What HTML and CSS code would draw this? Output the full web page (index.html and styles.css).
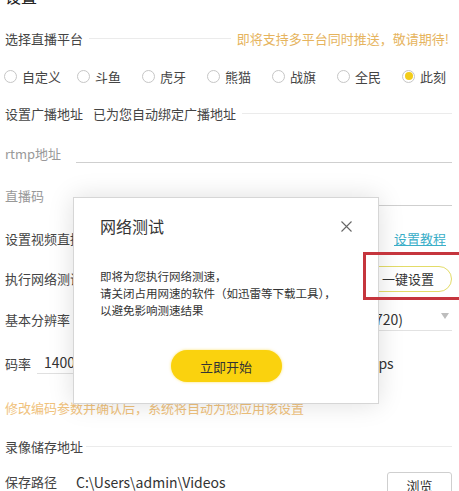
FILE: index.html
```html
<!DOCTYPE html>
<html lang="zh-CN">
<head>
<meta charset="utf-8">
<title>设置</title>
<link rel="stylesheet" href="styles.css">
</head>
<body>
<div class="page">
  <div class="row title">设置</div>
  <div class="row">
    <span class="label">选择直播平台</span>
    <span class="rule short"></span>
    <span class="gold">即将支持多平台同时推送，敬请期待!</span>
  </div>
  <div class="row radios">
    <label class="radio wide"><span class="dot"></span>自定义</label>
    <label class="radio"><span class="dot"></span>斗鱼</label>
    <label class="radio"><span class="dot"></span>虎牙</label>
    <label class="radio"><span class="dot"></span>熊猫</label>
    <label class="radio"><span class="dot"></span>战旗</label>
    <label class="radio"><span class="dot"></span>全民</label>
    <label class="radio last"><span class="dot on"></span>此刻</label>
  </div>
  <div class="row">
    <span class="label">设置广播地址</span>
    <span class="hint">已为您自动绑定广播地址</span>
    <span class="rule"></span>
  </div>
  <div class="row">
    <span class="label field-label muted">rtmp地址</span>
    <span class="field"></span>
  </div>
  <div class="row">
    <span class="label field-label muted">直播码</span>
    <span class="field"></span>
  </div>
  <div class="row">
    <span class="label">设置视频直播参数</span>
    <a class="link">设置教程</a>
  </div>
  <div class="row">
    <span class="label">执行网络测试</span>
    <button class="outline-btn">一键设置</button>
  </div>
  <div class="row">
    <span class="label field-label">基本分辨率</span>
    <span class="select"><span class="select-text">超清(1280*720)</span><span class="caret"></span></span>
  </div>
  <div class="row">
    <span class="label rate-label">码率</span>
    <span class="field rate">1400</span>
    <span class="unit">kbps</span>
  </div>
  <div class="row">
    <span class="notice">修改编码参数并确认后，系统将自动为您应用该设置</span>
  </div>
  <div class="row">
    <span class="label">录像储存地址</span>
    <span class="rule tight"></span>
  </div>
  <div class="row path-row">
    <span class="label field-label">保存路径</span>
    <span class="path">C:\Users\admin\Videos</span>
    <button class="browse">浏览</button>
  </div>
</div>

<div class="modal">
  <div class="modal-head">
    <span class="modal-title">网络测试</span>
    <svg class="close" width="11" height="11" viewBox="0 0 11 11"><path d="M0.5 0.5 L10.5 10.5 M10.5 0.5 L0.5 10.5" stroke="#666" stroke-width="1.1" fill="none"/></svg>
  </div>
  <div class="modal-body">
    <p>即将为您执行网络测速，</p>
    <p>请关闭占用网速的软件（如迅雷等下载工具），</p>
    <p>以避免影响测速结果</p>
  </div>
  <button class="start-btn">立即开始</button>
</div>

<div class="annot"></div>
</body>
</html>
```
FILE: styles.css
```css
* { box-sizing: border-box; }
html, body { margin: 0; padding: 0; }
body {
  width: 459px;
  height: 491px;
  overflow: hidden;
  position: relative;
  background: #fff;
  font-family: "Noto Sans CJK SC", "Noto Sans", sans-serif;
  font-size: 13px;
  color: #333;
}
.page {
  display: grid;
  grid-template-columns: minmax(0, 1fr);
  grid-template-rows: 45px 40px 36px 38px 42px 43px 42px 39px 42px 46px 42px 37px 34px;
  margin-top: -27px;
  padding: 0 7px 0 5px;
}
.row { display: flex; align-items: center; white-space: nowrap; min-width: 0; }
.title { font-size: 16px; color: #222; }
.label { color: #444; }
.muted { color: #999; }
.field-label { width: 71px; flex: 0 0 71px; }
.rule { flex: 1; height: 1px; background: #ebebeb; margin-left: 6px; }
.rule.short { flex: 0 0 142px; }
.rule.tight { margin-left: 3px; }
.gold { margin-left: auto; margin-right: 3px; color: #e6b45e; }
.hint { margin-left: 10px; color: #444; }

.radio { display: flex; align-items: center; width: 65px; flex: 0 0 65px; color: #444; }
.radio.wide { width: 73px; flex: 0 0 73px; margin-left: -1px; }
.radio.last { width: auto; flex: 0 0 auto; }
.dot {
  width: 13px; height: 13px; border: 1px solid #c6c6c6; border-radius: 50%;
  margin-right: 5px; display: flex; align-items: center; justify-content: center;
  background: #fff;
}
.dot.on::after {
  content: ""; width: 8px; height: 8px; border-radius: 50%; background: #f2cc1a;
}

.field { flex: 1; height: 20px; border-bottom: 1px solid #cfcfcf; }
.link { margin-left: auto; margin-right: 6px; color: #3aaec8; text-decoration: underline; }
.outline-btn {
  margin-left: auto; width: 88px; height: 26px; border: 1.5px solid #e3dc68; border-radius: 13px;
  background: #fff; font-family: inherit; font-size: 13px; color: #333; padding: 0;
}
.select {
  flex: 1; height: 24px; border-bottom: 1px solid #e2e2e2; display: flex; align-items: center;
  justify-content: flex-end; padding-right: 3px; font-size: 14px; color: #333;
}
.caret {
  width: 0; height: 0; border-left: 4px solid transparent; border-right: 4px solid transparent;
  border-top: 6px solid #bdbdbd; margin-left: 38px; margin-bottom: 5px;
}
.rate-label { width: 32px; flex: 0 0 32px; }
.rate { flex: 0 0 318px; height: 22px; padding-left: 7px; font-size: 14px; line-height: 20px; color: #333; border-bottom-color: #e0e0e0; }
.unit { margin-left: 7px; font-size: 14px; color: #333; }
.notice { color: #f0c27c; }
.path-row { align-items: flex-start; padding-top: 7px; line-height: 20px; }
.path { font-size: 14px; line-height: 20px; color: #333; }
.browse {
  margin-left: auto; margin-top: 0; width: 65px; height: 26px; border: 1px solid #cfcfcf; border-radius: 3px;
  background: #fff; font-family: inherit; font-size: 13px; color: #333; padding: 0;
}

.modal {
  position: absolute; left: 73px; top: 197px; width: 306px; height: 207px;
  background: #fff; border: 1px solid #d6d6d6;
  box-shadow: 0 0 24px rgba(0, 0, 0, 0.13);
  display: flex; flex-direction: column;
}
.modal-head {
  display: flex; align-items: center; justify-content: space-between;
  padding: 16px 26px 0 26px; height: 40px;
}
.modal-title { font-size: 16px; line-height: 24px; color: #333; }
.modal-body { margin-top: 30px; padding-left: 26px; font-size: 11.5px; line-height: 17px; color: #333; }
.modal-body p { margin: 0; white-space: nowrap; }
.start-btn {
  align-self: center; margin-top: 31px; width: 111px; height: 32px; border: none; border-radius: 16px;
  background: #fad20e; font-family: inherit; font-size: 13px; color: #333; padding: 0;
  box-shadow: 0 0 3px rgba(250, 210, 14, 0.6);
}
.annot {
  position: absolute; left: 363px; top: 252px; width: 110px; height: 48px;
  border: 3px solid #c5353d;
}
```
